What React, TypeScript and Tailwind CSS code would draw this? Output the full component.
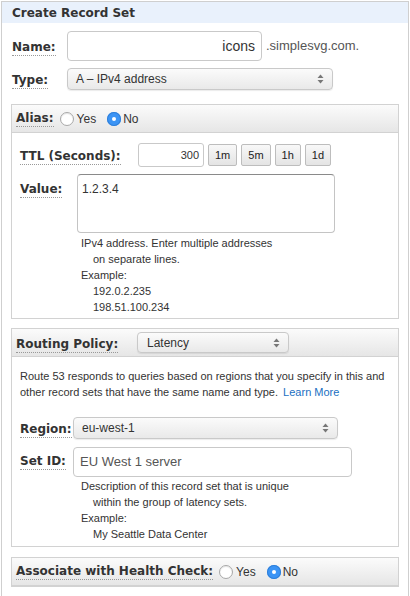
import React from "react";

const labelFont = { fontFamily: '"DejaVu Sans", Verdana, sans-serif' };

function Label({ children, className = "" }: { children: React.ReactNode; className?: string }) {
  return (
    <span
      style={labelFont}
      className={`inline-block border-b border-dotted border-[#999] text-[12px] font-bold leading-[15px] text-[#333] ${className}`}
    >
      {children}
    </span>
  );
}

function Radio({ checked }: { checked?: boolean }) {
  if (checked) {
    return (
      <span className="flex h-[14px] w-[14px] items-center justify-center rounded-full bg-[#3b94f5] shadow-[inset_0_0_0_1px_#2f7fd9]">
        <span className="h-[4px] w-[4px] rounded-full bg-white" />
      </span>
    );
  }
  return (
    <span className="h-[14px] w-[14px] rounded-full border border-[#a8a8a8] bg-white shadow-[inset_0_1px_1px_rgba(0,0,0,0.1)]" />
  );
}

function RadioGroup() {
  return (
    <div className="flex items-center text-[12px] text-[#333]">
      <Radio />
      <span className="ml-[3px]">Yes</span>
      <span className="ml-[11px]">
        <Radio checked />
      </span>
      <span className="ml-[2px]">No</span>
    </div>
  );
}

function SelectBox({ value, className = "" }: { value: string; className?: string }) {
  return (
    <div
      className={`flex items-center justify-between rounded-[4px] border border-[#c9c9c9] bg-gradient-to-b from-[#fbfbfb] to-[#e9e9e9] pl-[8px] pr-[8px] text-[12px] text-[#333] shadow-[0_1px_1px_rgba(0,0,0,0.08)] ${className}`}
    >
      <span>{value}</span>
      <svg width="7" height="10" viewBox="0 0 7 10">
        <path d="M3.5 0.5 L6.5 4 H0.5 Z" fill="#777" />
        <path d="M3.5 9.5 L6.5 6 H0.5 Z" fill="#777" />
      </svg>
    </div>
  );
}

function TtlButton({ children }: { children: React.ReactNode }) {
  return (
    <div className="flex h-[22px] items-center rounded-[2px] border border-[#bdbdbd] bg-gradient-to-b from-[#f8f8f8] to-[#e4e4e4] px-[6px] text-[11px] text-[#222]">
      {children}
    </div>
  );
}

function Panel({ header, children }: { header: React.ReactNode; children?: React.ReactNode }) {
  return (
    <div className="mx-[9px] border border-[#d2d2d2] bg-white">
      <div className="flex items-center border-b border-[#d2d2d2] bg-gradient-to-b from-[#fbfbfb] to-[#e6e6e6] pl-[4px]">
        {header}
      </div>
      {children}
    </div>
  );
}

export default function App() {
  return (
    <div
      className="min-h-[596px] bg-white pl-px pt-px text-[#333]"
      style={{ fontFamily: '"Liberation Sans", Arial, sans-serif' }}
    >
      <div className="min-h-[595px] w-[408px] border-x border-t border-[#cfcfcf]">
        <div className="flex h-[21px] items-center bg-[#e9f1fc] pl-[10px]">
          <Label className="border-b-0 pt-[1px]">Create Record Set</Label>
        </div>

        {/* name + type */}
        <div className="flex flex-col gap-[6px] pl-[10px] pt-[8px]">
          <div className="flex items-center">
            <div className="w-[55px] pb-[1px]">
              <Label>Name:</Label>
            </div>
            <div className="flex h-[30px] w-[195px] items-center justify-end rounded-[4px] border border-[#c9c9c9] pr-[6px] text-[14px] text-[#333]">
              icons
            </div>
            <span className="ml-[4px] text-[13px] text-[#555]">.simplesvg.com.</span>
          </div>
          <div className="flex items-center">
            <div className="w-[55px]">
              <Label>Type:</Label>
            </div>
            <SelectBox value="A – IPv4 address" className="h-[22px] w-[266px]" />
          </div>
        </div>

        {/* alias panel */}
        <div className="mt-[13px]">
          <Panel
            header={
              <div className="flex h-[27px] items-center gap-[6px]">
                <Label>Alias:</Label>
                <RadioGroup />
              </div>
            }
          >
            <div className="pb-[3px] pl-[8px] pt-[10px]">
              <div className="flex items-center">
                <div className="w-[118px]">
                  <Label>TTL (Seconds):</Label>
                </div>
                <div className="flex h-[24px] w-[66px] items-center justify-end rounded-[3px] border border-[#c9c9c9] pr-[4px] text-[11px]">
                  300
                </div>
                <div className="ml-[4px] flex gap-[4px]">
                  <TtlButton>1m</TtlButton>
                  <TtlButton>5m</TtlButton>
                  <TtlButton>1h</TtlButton>
                  <TtlButton>1d</TtlButton>
                </div>
              </div>
              <div className="mt-[7px] flex items-start">
                <div className="w-[57px] pt-[2px]">
                  <Label>Value:</Label>
                </div>
                <div className="h-[59px] w-[258px] rounded-[4px] border border-[#c4c4c4] border-t-[#8a8a8a] pl-[4px] pt-[5px] text-[12px]">
                  1.2.3.4
                </div>
              </div>
              <div className="ml-[61px] mt-[2px] text-[11px] leading-[16px]">
                <div>IPv4 address. Enter multiple addresses</div>
                <div className="pl-[12px]">on separate lines.</div>
                <div>Example:</div>
                <div className="pl-[12px]">192.0.2.235</div>
                <div className="pl-[12px]">198.51.100.234</div>
              </div>
            </div>
          </Panel>
        </div>

        {/* routing panel */}
        <div className="mt-[9px]">
          <Panel
            header={
              <div className="flex h-[27px] items-center">
                <div className="w-[121px]">
                  <Label>Routing Policy:</Label>
                </div>
                <SelectBox value="Latency" className="h-[21px] w-[152px] pl-[9px]" />
              </div>
            }
          >
            <div className="pb-[4px] pl-[8px] pt-[11px]">
              <p className="text-[11px] leading-[16px]">
                Route 53 responds to queries based on regions that you specify in this and other record
                sets that have the same name and type.{" "}
                <span className="ml-[2px] text-[#1a6fc2]">Learn More</span>
              </p>
              <div className="mt-[16px] flex items-center">
                <div className="w-[53px]">
                  <Label>Region:</Label>
                </div>
                <SelectBox value="eu-west-1" className="h-[22px] w-[265px] pl-[7px]" />
              </div>
              <div className="mt-[7px] flex items-start">
                <div className="w-[53px] pt-[1px]">
                  <Label>Set ID:</Label>
                </div>
                <div className="flex h-[30px] w-[279px] items-center rounded-[4px] border border-[#c9c9c9] pl-[6px] text-[13px] text-[#555]">
                  EU West 1 server
                </div>
              </div>
              <div className="ml-[61px] mt-[1px] text-[11px] leading-[16px]">
                <div>Description of this record set that is unique</div>
                <div className="pl-[12px]">within the group of latency sets.</div>
                <div>Example:</div>
                <div className="pl-[12px]">My Seattle Data Center</div>
              </div>
            </div>
          </Panel>
        </div>

        {/* health check */}
        <div className="mt-[10px]">
          <Panel
            header={
              <div className="flex h-[27px] items-center gap-[6px]">
                <Label>Associate with Health Check:</Label>
                <RadioGroup />
              </div>
            }
          />
        </div>
      </div>
    </div>
  );
}
